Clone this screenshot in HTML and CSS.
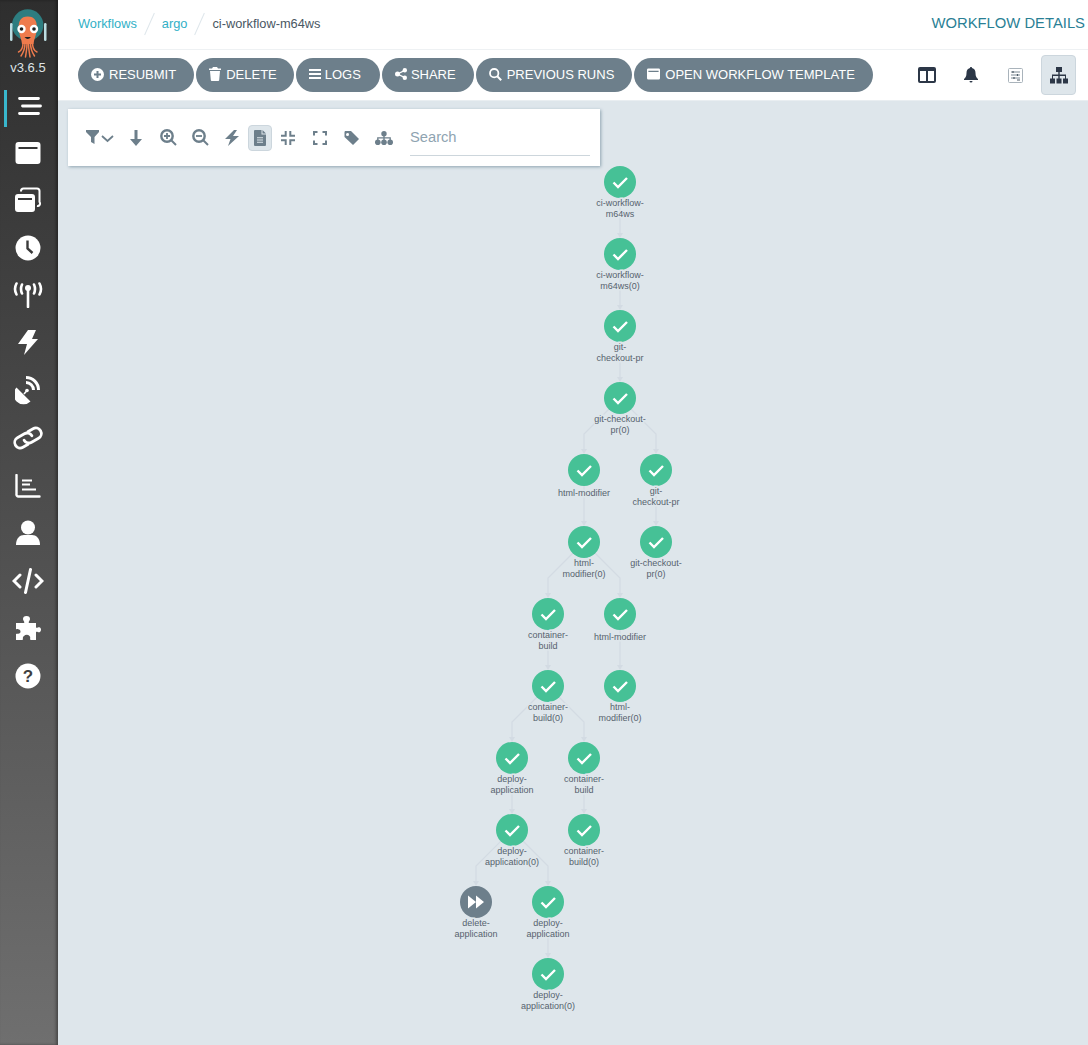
FILE: index.html
```html
<!DOCTYPE html>
<html lang="en">
<head>
  <meta charset="UTF-8">
  <title>ci-workflow-m64ws</title>
  <link rel="stylesheet" href="styles.css">
</head>
<body>
  <svg class="defs" width="0" height="0">
    <defs>
      <g id="ok">
        <circle r="16" fill="#46c196"/>
        <path d="M-6.5 0.5 L-2 5 L7 -4" fill="none" stroke="#fff" stroke-width="2.4"/>
      </g>
      <g id="skip">
        <circle r="16" fill="#6d7f8b"/>
        <path d="M-8 -6.5 L0 0 L-8 6.5 Z M0 -6.5 L8 0 L0 6.5 Z" fill="#fff"/>
      </g>
      <path id="arrow" d="M-3 -5 H3 L0 0 Z" fill="#d3dbe3"/>
    </defs>
  </svg>

  <nav class="sidebar">
    <div class="logo">
      <svg width="40" height="50" viewBox="8 8 40 50">
        <circle cx="27.7" cy="25" r="15.700" fill="#2d7d80"/>
        <rect x="10" y="23" width="2.500" height="18" rx="1.200" fill="#bcdde2"/>
        <rect x="44" y="23" width="2.500" height="18" rx="1.200" fill="#bcdde2"/>
        <path d="M19 31 C17.500 21 21 16.500 27.700 16.500 C34.500 16.500 38 21 36.500 31 C36 36 34 39 33.500 44 H22 C21.500 39 19.500 36 19 31 Z" fill="#ef7b4d"/>
        <path d="M23 43 C23 49 21 51 18.500 52 M25 43 C25 50 23 53 21 56 M27 43 C27 50 26 53 25.500 57 M28.500 43 C28.500 50 29.500 53 30 57 M30.500 43 C30.500 50 32.500 53 34.500 56 M32.500 43 C32.500 49 34.500 51 37 52" fill="none" stroke="#ef7b4d" stroke-width="1.500" stroke-linecap="round"/>
        <circle cx="21.500" cy="29" r="4.200" fill="#fff"/>
        <circle cx="34" cy="29" r="4.200" fill="#fff"/>
        <circle cx="21.500" cy="29" r="1.800" fill="#222"/>
        <circle cx="34" cy="29" r="1.800" fill="#222"/>
        <path d="M24.500 37 Q27.700 41 31 37 Z" fill="#222"/>
      </svg>
      <div class="version">v3.6.5</div>
    </div>
    <a class="nav-item active">
      <svg width="24" height="24" viewBox="0 0 24 24"><path d="M1.500 4.500 H20.500 M4.500 12 H22.500 M1.500 19.500 H20.500" stroke="#fff" stroke-width="2.800" stroke-linecap="round"/></svg>
    </a>
    <a class="nav-item">
      <svg width="26" height="24" viewBox="0 0 26 24"><path fill-rule="evenodd" d="M3.500 1 H22.500 A3 3 0 0 1 25.500 4 V20 A3 3 0 0 1 22.500 23 H3.500 A3 3 0 0 1 .5 20 V4 A3 3 0 0 1 3.500 1 Z M3.500 6 V8 H22.500 V6 Z" fill="#fff"/></svg>
    </a>
    <a class="nav-item">
      <svg width="26" height="26" viewBox="0 0 26 26"><path fill-rule="evenodd" d="M3 7 H17 A3 3 0 0 1 20 10 V22 A3 3 0 0 1 17 25 H3 A3 3 0 0 1 0 22 V10 A3 3 0 0 1 3 7 Z M3 11 V13 H17 V11 Z" fill="#fff"/><path d="M6 4.500 V4 A2.500 2.500 0 0 1 8.500 1.500 H22 A2.500 2.500 0 0 1 24.500 4 V15 A2.500 2.500 0 0 1 22 19" fill="none" stroke="#fff" stroke-width="2"/></svg>
    </a>
    <a class="nav-item">
      <svg width="26" height="26" viewBox="0 0 26 26"><circle cx="13" cy="13" r="12.500" fill="#fff"/><path d="M12.500 5.500 V13.500 L17.500 18" fill="none" stroke="#3a3a3a" stroke-width="2.400"/></svg>
    </a>
    <a class="nav-item">
      <svg width="30" height="26" viewBox="0 0 30 26"><circle cx="15" cy="6" r="3" fill="#fff"/><path d="M15 7 V25" stroke="#fff" stroke-width="2.600" stroke-linecap="round"/><path d="M9 2.500 Q7 7 9 11.500 M21 2.500 Q23 7 21 11.500 M3.500 1.500 Q0.500 7 3.500 12.500 M26.500 1.500 Q29.500 7 26.500 12.500" fill="none" stroke="#fff" stroke-width="2.600" stroke-linecap="round"/></svg>
    </a>
    <a class="nav-item">
      <svg width="20" height="26" viewBox="0 0 20 26"><path d="M10 0 H18 L14 9 H20 L6 25 L9 14 H0 Z" fill="#fff"/></svg>
    </a>
    <a class="nav-item">
      <svg width="26" height="30" viewBox="0 0 26 30"><path d="M1.500 11.500 L15.500 25.500 A9.900 9.900 0 0 1 1.500 11.500 Z" fill="#fff"/><circle cx="12" cy="14.500" r="1.800" fill="#fff"/><path d="M9 18 L12 14.500" stroke="#fff" stroke-width="1.600"/><path d="M11 6.500 A7.500 7.500 0 0 1 18.500 14 M11 1.500 A12.500 12.500 0 0 1 23.500 14" fill="none" stroke="#fff" stroke-width="3"/></svg>
    </a>
    <a class="nav-item">
      <svg width="32" height="24" viewBox="-16 -12 32 24"><g transform="rotate(-30)"><path d="M-3 5.500 H-9 A5.500 5.500 0 0 1 -9 -5.500 H-1 A5.500 5.500 0 0 1 4.500 0 M3 -5.500 H9 A5.500 5.500 0 0 1 9 5.500 H1 A5.500 5.500 0 0 1 -4.500 0" fill="none" stroke="#fff" stroke-width="2.800" stroke-linecap="round"/></g></svg>
    </a>
    <a class="nav-item">
      <svg width="26" height="24" viewBox="0 0 26 24"><path d="M1.500 1 V20 A2 2 0 0 0 3.500 22.500 H24.500" fill="none" stroke="#fff" stroke-width="2.400" stroke-linecap="round"/><path d="M7 6.500 H17 M7 10.500 H15 M7 15.500 H21" stroke="#fff" stroke-width="2.200"/></svg>
    </a>
    <a class="nav-item">
      <svg width="26" height="26" viewBox="0 0 26 26"><circle cx="13" cy="7.500" r="7" fill="#fff"/><path d="M1 25 C1 18 5 15 9 15 H17 C21 15 25 18 25 25 Z" fill="#fff"/></svg>
    </a>
    <a class="nav-item">
      <svg width="32" height="26" viewBox="0 0 32 26"><path d="M8 7 L2 13 L8 19 M24 7 L30 13 L24 19 M18.500 1.500 L13.500 24.500" fill="none" stroke="#fff" stroke-width="3" stroke-linecap="round"/></svg>
    </a>
    <a class="nav-item">
      <svg width="26" height="26" viewBox="0 0 26 26"><path d="M1 7 H9 C10 5.500 8 5 8 3 A3.500 3 0 0 1 15 3 C15 5 13 5.500 14 7 H21 V11.500 C22.500 12.500 23 10.500 25 11.500 A3 3 0 0 1 25 16 C23 17 22.500 15 21 16 V24 H15.500 C14.500 22.500 16 21.500 14.500 20 A3.500 3 0 0 0 9 20 C7 21.500 8.500 22.500 7.500 24 H1 V18 C3 17.500 5.500 18 5.500 15.500 C5.500 13 3 13.500 1 13 Z" fill="#fff"/></svg>
    </a>
    <a class="nav-item">
      <svg width="26" height="26" viewBox="0 0 26 26"><circle cx="13" cy="13" r="12.500" fill="#fff"/><text class="help-mark" x="13" y="18.500">?</text></svg>
    </a>
  </nav>

  <div class="page">
    <header class="top-bar">
      <div class="breadcrumbs">
        <a class="crumb">Workflows</a>
        <span class="crumb-sep"></span>
        <a class="crumb">argo</a>
        <span class="crumb-sep"></span>
        <span class="crumb-current">ci-workflow-m64ws</span>
      </div>
      <div class="page-title">WORKFLOW DETAILS</div>
    </header>

    <div class="tool-bar">
      <div class="actions">
        <button class="action-btn">
          <svg width="13" height="13" viewBox="0 0 13 13"><circle cx="6.500" cy="6.500" r="6.500" fill="#fff"/><path d="M6.500 3 V10 M3 6.500 H10" stroke="#6d7f8b" stroke-width="2"/></svg>RESUBMIT
        </button>
        <button class="action-btn btn-delete">
          <svg width="12" height="14" viewBox="0 0 12 14"><path d="M4 0 H8 L9 1.500 H12 V3 H0 V1.500 H3 Z M1 4 H11 L10.200 13 A1 1 0 0 1 9.200 14 H2.800 A1 1 0 0 1 1.800 13 Z" fill="#fff"/></svg>DELETE
        </button>
        <button class="action-btn btn-tight btn-logs">
          <svg width="12" height="12" viewBox="0 0 12 12"><path d="M0 2 H12 M0 6 H12 M0 10 H12" stroke="#fff" stroke-width="2"/></svg>LOGS
        </button>
        <button class="action-btn btn-tight">
          <svg width="12" height="12" viewBox="0 0 12 12"><circle cx="2.500" cy="6" r="2.500" fill="#fff"/><circle cx="9.800" cy="2.300" r="2.200" fill="#fff"/><circle cx="9.800" cy="9.700" r="2.200" fill="#fff"/><path d="M2.500 6 L9.800 2.300 M2.500 6 L9.800 9.700" stroke="#fff" stroke-width="1.300"/></svg>SHARE
        </button>
        <button class="action-btn">
          <svg width="13" height="13" viewBox="0 0 13 13"><circle cx="5.200" cy="5.200" r="4.200" fill="none" stroke="#fff" stroke-width="1.800"/><path d="M8.300 8.300 L12.200 12.200" stroke="#fff" stroke-width="2"/></svg>PREVIOUS RUNS
        </button>
        <button class="action-btn">
          <svg width="13" height="12" viewBox="0 0 14 12"><path fill-rule="evenodd" d="M1.500 0 H12.500 A1.500 1.500 0 0 1 14 1.500 V10.500 A1.500 1.500 0 0 1 12.500 12 H1.500 A1.500 1.500 0 0 1 0 10.500 V1.500 A1.500 1.500 0 0 1 1.500 0 Z M1.500 2.500 V3.800 H12.500 V2.500 Z" fill="#fff"/></svg>OPEN WORKFLOW TEMPLATE
        </button>
      </div>
      <div class="view-tabs">
        <a class="view-tab">
          <svg width="18" height="16" viewBox="0 0 18 16"><path fill-rule="evenodd" d="M2 0 H16 A2 2 0 0 1 18 2 V14 A2 2 0 0 1 16 16 H2 A2 2 0 0 1 0 14 V2 A2 2 0 0 1 2 0 Z M2 4 V14 H8 V4 Z M10 4 V14 H16 V4 Z" fill="#2c3747"/></svg>
        </a>
        <a class="view-tab">
          <svg width="14" height="16" viewBox="0 0 14 16"><path d="M7 0 C7.800 0 8 .6 8 1.100 C10.500 1.600 11.500 3.500 11.500 6 C11.500 9.500 12.500 10.500 14 12 V13 H0 V12 C1.500 10.500 2.500 9.500 2.500 6 C2.500 3.500 3.500 1.600 6 1.100 C6 .6 6.200 0 7 0 Z M5.500 14 H8.500 A1.500 1.500 0 0 1 5.500 14 Z" fill="#2c3747"/></svg>
        </a>
        <a class="view-tab">
          <svg width="15" height="15" viewBox="0 0 15 15"><rect x=".5" y=".5" width="14" height="14" rx="1" fill="#fff" stroke="#a9b3bb"/><path d="M3 4 H12 M3 7 H12 M3 10 H12" stroke="#7d8a94" stroke-width="1"/><path d="M5 3 V5 M9.500 6 V8 M6 9 V11 M9 12 H12" stroke="#4c5a66" stroke-width="1.200"/></svg>
        </a>
        <a class="view-tab selected">
          <svg width="18" height="17" viewBox="0 0 18 17"><path d="M6 0 H12 V5 H9.700 V7.500 H16 V11.500 H18 V16.500 H13 V11.500 H15 V9 H9.700 V11.500 H11.500 V16.500 H6.500 V11.500 H8.300 V9 H3 V11.500 H5 V16.500 H0 V11.500 H2 V7.500 H8.300 V5 H6 Z" fill="#2c3747"/></svg>
        </a>
      </div>
    </div>

    <main class="canvas">
      <div class="graph-options">
        <a class="opt-btn opt-filter">
          <svg width="30" height="16" viewBox="0 0 30 16"><path d="M1 0 H14 V2 L9.500 7 V14 L6 12 V7 L1 2 Z" fill="#6d7f8b"/><path d="M17 6 L22.500 11 L28 6" fill="none" stroke="#6d7f8b" stroke-width="1.800"/></svg>
        </a>
        <a class="opt-btn">
          <svg width="12" height="16" viewBox="0 0 12 16"><path d="M4.500 0 H7.500 V9 H12 L6 16 L0 9 H4.500 Z" fill="#6d7f8b"/></svg>
        </a>
        <a class="opt-btn">
          <svg width="17" height="17" viewBox="0 0 17 17"><circle cx="7" cy="7" r="5.700" fill="none" stroke="#6d7f8b" stroke-width="2.400"/><path d="M11 11 L16 16" stroke="#6d7f8b" stroke-width="2"/><path d="M7 4 V10 M4 7 H10" stroke="#6d7f8b" stroke-width="1.800"/></svg>
        </a>
        <a class="opt-btn">
          <svg width="17" height="17" viewBox="0 0 17 17"><circle cx="7" cy="7" r="5.700" fill="none" stroke="#6d7f8b" stroke-width="2.400"/><path d="M11 11 L16 16" stroke="#6d7f8b" stroke-width="2"/><path d="M4 7 H10" stroke="#6d7f8b" stroke-width="1.800"/></svg>
        </a>
        <a class="opt-btn">
          <svg width="14" height="16" viewBox="0 0 14 16"><path d="M9 0 L0 9 H5.500 L3 16 L14 6 H8 L12 0 Z" fill="#6d7f8b"/></svg>
        </a>
        <a class="opt-btn opt-on">
          <svg width="12" height="16" viewBox="0 0 12 16"><path fill-rule="evenodd" d="M1 0 H7.500 V4.500 H12 V15 A1 1 0 0 1 11 16 H1 A1 1 0 0 1 0 15 V1 A1 1 0 0 1 1 0 Z M3 7.300 V8.300 H9 V7.300 Z M3 9.500 V10.500 H9 V9.500 Z M3 11.700 V12.700 H9 V11.700 Z M8.500 0 L12 3.500 H8.500 Z" fill="#6d7f8b"/></svg>
        </a>
        <a class="opt-btn">
          <svg width="14" height="14" viewBox="0 0 14 14"><path d="M4.700 0 V4.700 H0 M9.300 0 V4.700 H14 M4.700 14 V9.300 H0 M9.300 14 V9.300 H14" fill="none" stroke="#6d7f8b" stroke-width="2"/></svg>
        </a>
        <a class="opt-btn">
          <svg width="14" height="14" viewBox="0 0 14 14"><path d="M1 4.500 V1 H4.500 M9.500 1 H13 V4.500 M13 9.500 V13 H9.500 M4.500 13 H1 V9.500" fill="none" stroke="#6d7f8b" stroke-width="2"/></svg>
        </a>
        <a class="opt-btn">
          <svg width="16" height="14" viewBox="0 0 16 14"><path fill-rule="evenodd" d="M1 0 H7 L15 8 L9 14 L0.500 6 V1 Z M3.500 2 A1.500 1.500 0 1 0 3.501 5 A1.500 1.500 0 0 0 3.500 2 Z" fill="#6d7f8b"/></svg>
        </a>
        <a class="opt-btn">
          <svg width="18" height="14" viewBox="0 0 18 14"><circle cx="9" cy="2.700" r="2.700" fill="#6d7f8b"/><circle cx="2.800" cy="11.200" r="2.800" fill="#6d7f8b"/><circle cx="9" cy="11.200" r="2.800" fill="#6d7f8b"/><circle cx="15.200" cy="11.200" r="2.800" fill="#6d7f8b"/><path d="M2.800 10 V6.800 H15.200 V10 M9 3 V10" fill="none" stroke="#6d7f8b" stroke-width="1.300"/></svg>
        </a>
        <input class="search" type="text" placeholder="Search">
      </div>

      <!-- viewBox keeps page coordinates, so node positions read as in the picture -->
      <svg class="graph" width="1030" height="944" viewBox="58 101 1030 944">
        <g class="edges">
          <path d="M620 198 V234 M620 270 V306 M620 342 V378"/>
          <path d="M620 398 L584 434 V450 M620 398 L656 434 V450"/>
          <path d="M584 486 V522 M656 486 V522"/>
          <path d="M584 542 L548 578 V594 M584 542 L620 578 V594"/>
          <path d="M548 630 V666 M620 630 V666"/>
          <path d="M548 686 L512 722 V738 M548 686 L584 722 V738"/>
          <path d="M512 774 V810 M584 774 V810"/>
          <path d="M512 830 L476 866 V882 M512 830 L548 866 V882"/>
          <path d="M548 918 V954"/>
        </g>
        <use href="#arrow" x="620" y="238"/>
        <use href="#arrow" x="620" y="310"/>
        <use href="#arrow" x="620" y="382"/>
        <use href="#arrow" x="584" y="454"/>
        <use href="#arrow" x="656" y="454"/>
        <use href="#arrow" x="584" y="526"/>
        <use href="#arrow" x="656" y="526"/>
        <use href="#arrow" x="548" y="598"/>
        <use href="#arrow" x="620" y="598"/>
        <use href="#arrow" x="548" y="670"/>
        <use href="#arrow" x="620" y="670"/>
        <use href="#arrow" x="512" y="742"/>
        <use href="#arrow" x="584" y="742"/>
        <use href="#arrow" x="512" y="814"/>
        <use href="#arrow" x="584" y="814"/>
        <use href="#arrow" x="476" y="886"/>
        <use href="#arrow" x="548" y="886"/>
        <use href="#arrow" x="548" y="958"/>

        <g transform="translate(620 182)"><use href="#ok"/><text y="24">ci-workflow-</text><text y="35">m64ws</text></g>
        <g transform="translate(620 254)"><use href="#ok"/><text y="24">ci-workflow-</text><text y="35">m64ws(0)</text></g>
        <g transform="translate(620 326)"><use href="#ok"/><text y="24">git-</text><text y="35">checkout-pr</text></g>
        <g transform="translate(620 398)"><use href="#ok"/><text y="24">git-checkout-</text><text y="35">pr(0)</text></g>
        <g transform="translate(584 470)"><use href="#ok"/><text y="26">html-modifier</text></g>
        <g transform="translate(656 470)"><use href="#ok"/><text y="24">git-</text><text y="35">checkout-pr</text></g>
        <g transform="translate(584 542)"><use href="#ok"/><text y="24">html-</text><text y="35">modifier(0)</text></g>
        <g transform="translate(656 542)"><use href="#ok"/><text y="24">git-checkout-</text><text y="35">pr(0)</text></g>
        <g transform="translate(548 614)"><use href="#ok"/><text y="24">container-</text><text y="35">build</text></g>
        <g transform="translate(620 614)"><use href="#ok"/><text y="26">html-modifier</text></g>
        <g transform="translate(548 686)"><use href="#ok"/><text y="24">container-</text><text y="35">build(0)</text></g>
        <g transform="translate(620 686)"><use href="#ok"/><text y="24">html-</text><text y="35">modifier(0)</text></g>
        <g transform="translate(512 758)"><use href="#ok"/><text y="24">deploy-</text><text y="35">application</text></g>
        <g transform="translate(584 758)"><use href="#ok"/><text y="24">container-</text><text y="35">build</text></g>
        <g transform="translate(512 830)"><use href="#ok"/><text y="24">deploy-</text><text y="35">application(0)</text></g>
        <g transform="translate(584 830)"><use href="#ok"/><text y="24">container-</text><text y="35">build(0)</text></g>
        <g transform="translate(476 902)"><use href="#skip"/><text y="24">delete-</text><text y="35">application</text></g>
        <g transform="translate(548 902)"><use href="#ok"/><text y="24">deploy-</text><text y="35">application</text></g>
        <g transform="translate(548 974)"><use href="#ok"/><text y="24">deploy-</text><text y="35">application(0)</text></g>
      </svg>
    </main>
  </div>
</body>
</html>
```

FILE: styles.css
```css
html, body {
  height: 100%;
  margin: 0;
}

body {
  display: flex;
  overflow: hidden;
  background-color: #dee6eb;
  font-family: "Liberation Sans", Arial, sans-serif;
}

.defs {
  position: absolute;
}

/* side nav */
.sidebar {
  flex: 0 0 58px;
  height: 100%;
  background: linear-gradient(to bottom, #2e2e2e, #6f6f6f);
  box-shadow: inset -2px 0 3px rgba(0, 0, 0, 0.35);
}

.logo {
  height: 81px;
  padding-top: 8px;
  padding-right: 2px;
  box-sizing: border-box;
  text-align: center;
}

.logo svg {
  display: block;
  margin: 0 auto;
}

.version {
  margin-top: 3px;
  color: #dfe3e6;
  font-size: 13px;
  line-height: 14px;
}

.nav-item {
  display: flex;
  align-items: center;
  justify-content: center;
  height: 47.6px;
  padding-right: 2px;
}

.nav-item.active {
  box-sizing: border-box;
  align-items: flex-start;
  height: 37px;
  margin: 9px 0 1.8px 4px;
  padding-top: 3.5px;
  padding-right: 6px;
  border-left: 3px solid #39b7cd;
}

.help-mark {
  fill: #3f3f3f;
  font-size: 17px;
  font-weight: bold;
  text-anchor: middle;
}

/* top bars */
.page {
  flex: 1;
  display: flex;
  flex-direction: column;
  min-width: 0;
}

.top-bar {
  flex: 0 0 47px;
  display: flex;
  align-items: center;
  justify-content: space-between;
  padding-bottom: 2px;
  padding-left: 20px;
  padding-right: 3px;
  background-color: #fff;
  border-bottom: 1px solid #eef1f3;
}

.breadcrumbs {
  display: flex;
  align-items: center;
  font-size: 12.8px;
}

.crumb {
  color: #32b0c6;
}

.crumb-current {
  color: #495763;
}

.crumb-sep {
  width: 1px;
  height: 24px;
  margin: 0 12px;
  background-color: #dee6eb;
  transform: rotate(24deg);
}

.page-title {
  margin-bottom: 2px;
  color: #2a7f95;
  font-size: 14.8px;
}

.tool-bar {
  flex: 0 0 51px;
  display: flex;
  align-items: center;
  justify-content: space-between;
  padding-left: 20px;
  padding-right: 12px;
  background-color: #fff;
  box-sizing: border-box;
  border-bottom: 1px solid #e9eef1;
}

.actions {
  display: flex;
  gap: 2px;
}

.action-btn {
  display: flex;
  align-items: center;
  gap: 5px;
  box-sizing: border-box;
  height: 34px;
  padding: 0 18px 2px 13px;
  border: 0;
  border-radius: 17px;
  background-color: #6d7f8b;
  color: #fff;
  font-family: inherit;
  font-size: 13px;
}

.btn-delete {
  padding-right: 17px;
}

.btn-tight {
  gap: 4px;
}

.btn-logs {
  padding-right: 19px;
}

.view-tabs {
  display: flex;
  align-items: center;
  gap: 10px;
}

.view-tab {
  display: flex;
  align-items: center;
  justify-content: center;
  width: 34px;
  height: 40px;
  border-radius: 4px;
}

.view-tab.selected {
  width: 35px;
  margin-left: -1px;
  background-color: #dee6eb;
  border: 1px solid #ccd6dd;
  box-sizing: border-box;
}

/* graph */
.canvas {
  flex: 1;
  position: relative;
}

.graph-options {
  position: absolute;
  left: 10px;
  top: 8px;
  display: flex;
  align-items: center;
  box-sizing: border-box;
  width: 532px;
  height: 57px;
  padding-left: 16px;
  background-color: #fff;
  box-shadow: 1px 1px 3px #8fa4b1;
}

.opt-btn {
  flex: none;
  display: flex;
  align-items: center;
  justify-content: center;
  width: 24px;
  height: 26px;
  margin-right: 8px;
  border-radius: 4px;
  box-sizing: border-box;
}

.opt-filter {
  width: 32px;
}

.opt-on {
  margin-left: -4px;
  margin-right: 4px;
  background-color: #dee6eb;
  border: 1px solid #ccd6dd;
}

.search {
  flex: none;
  box-sizing: border-box;
  width: 180px;
  height: 36px;
  margin-left: 6px;
  padding: 0;
  border: 0;
  border-bottom: 1px solid #cdd6dc;
  outline: none;
  color: #495763;
  font-family: inherit;
  font-size: 14.7px;
}

.search::placeholder {
  color: #8fa4b1;
}

.graph {
  display: block;
}

.edges path {
  fill: none;
  stroke: #d3dbe3;
  stroke-width: 1.2;
}

.graph text {
  fill: #56626d;
  font-size: 9px;
  text-anchor: middle;
  stroke: #dee6eb;
  stroke-width: 3px;
  paint-order: stroke;
}
```
